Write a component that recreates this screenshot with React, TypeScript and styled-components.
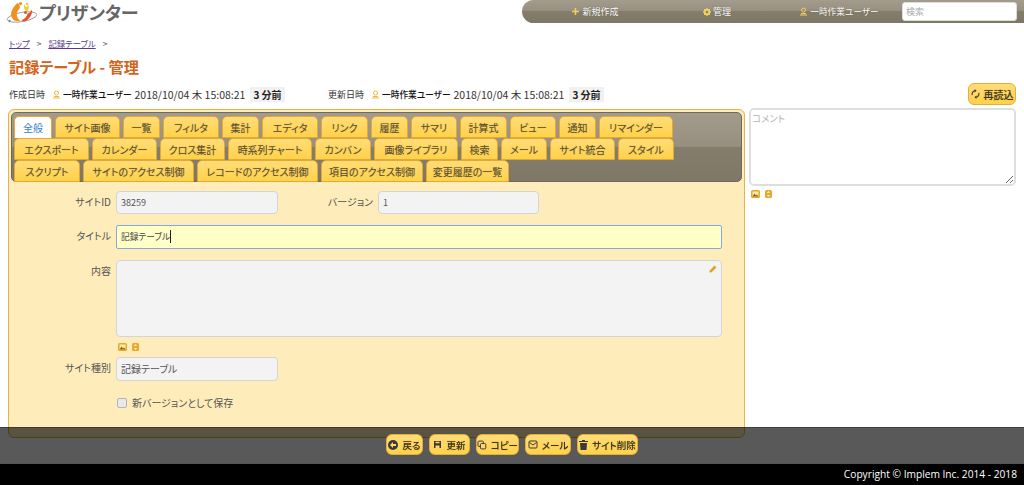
import React from 'react';
import styled, { createGlobalStyle } from 'styled-components';

const GlobalStyle = createGlobalStyle`
  html, body {
    margin: 0;
    padding: 0;
    height: 100%;
    overflow: hidden;
    background: #fff;
  }
  body {
    font-family: "Noto Sans CJK JP", "Noto Sans", sans-serif;
    font-size: 10px;
    font-feature-settings: "palt";
    color: #333;
  }
`;

const barGradient = 'linear-gradient(to bottom, #a39b8c 0%, #968e7e 50%, #857d6c 50%, #7e7767 100%)';
const buttonGradient = 'linear-gradient(to bottom, #ffdc78 0%, #ffd24a 100%)';

const Page = styled.div`
  width: 1024px;
  height: 485px;
  overflow: hidden;
`;

const Header = styled.header`
  display: flex;
  justify-content: space-between;
  height: 32px;
`;

const Logo = styled.div`
  display: flex;
  align-items: flex-start;
  padding-left: 5px;
`;

const LogoText = styled.span`
  font-size: 18px;
  font-weight: 700;
  line-height: 24px;
  color: #666;
  letter-spacing: -0.2px;
  white-space: nowrap;
`;

const Nav = styled.nav`
  width: 502px;
  height: 23px;
  box-sizing: border-box;
  padding-left: 12px;
  display: flex;
  align-items: center;
  background: ${barGradient};
  border-radius: 12px 0 0 12px;
`;

const NavItem = styled.a`
  width: 122px;
  display: flex;
  align-items: center;
  justify-content: center;
  gap: 2px;
  color: #fff;
  font-size: ${p => p.$fs ?? 9}px;
  white-space: nowrap;
  text-shadow: 0 0 1px #544d3e;
`;

const SearchBox = styled.input`
  width: 115px;
  height: 19px;
  margin-left: 2px;
  box-sizing: border-box;
  padding: 0 3px;
  border: 1px solid #ddd;
  border-radius: 3px;
  background: #fff;
  font: inherit;
  font-size: 9px;
  &::placeholder { color: #aaa; }
`;

const Breadcrumb = styled.div`
  display: flex;
  align-items: center;
  height: 22px;
  padding-left: 9px;
  font-size: 8.4px;
  a { color: #5a3c8c; text-decoration: underline; }
`;

const Sep = styled.span`
  margin: 0 7px;
  color: #555;
`;

const Title = styled.h1`
  margin: 0;
  height: 26px;
  padding-left: 9px;
  font-size: 15.2px;
  line-height: 24px;
  font-weight: 700;
  color: #d2651b;
`;

const InfoRow = styled.div`
  display: flex;
  align-items: center;
  height: 28px;
  padding: 0 8px 0 9px;
`;

const InfoGroup = styled.div`
  width: 319px;
  display: flex;
  align-items: center;
  font-size: 9px;
  white-space: nowrap;
`;

const InfoUser = styled.span`
  display: inline-flex;
  align-items: center;
  gap: 2px;
  margin: 0 3px 0 7px;
  font-size: 8.7px;
  font-weight: 500;
  color: #111;
`;

const Stamp = styled.span`
  font-size: 10.5px;
`;

const Ago = styled.span`
  margin-left: 5px;
  padding: 0 3px;
  background: #f1f1f1;
  font-size: 10px;
  font-weight: 700;
  color: #222;
`;

const Button = styled.button`
  display: inline-flex;
  align-items: center;
  justify-content: center;
  gap: 4px;
  box-sizing: border-box;
  width: ${p => p.$w}px;
  height: 21px;
  padding: 0;
  border: 1px solid #e6ae35;
  border-radius: 6px;
  background: ${buttonGradient};
  color: #3d3522;
  font: inherit;
  font-size: 9.5px;
  font-weight: 500;
  white-space: nowrap;
  text-shadow: 0 0 1px #b99638;
`;

const ReloadButton = styled(Button)`
  margin-left: auto;
  height: 22px;
  font-size: 10px;
`;

const Main = styled.main`
  display: flex;
  align-items: flex-start;
  padding-left: 8px;
`;

const Panel = styled.section`
  width: 737px;
  height: 329px;
  box-sizing: border-box;
  border: 1px solid #e5b24c;
  border-radius: 6px;
  padding: 2px;
  margin-top: 1px;
  background: #feedbb;
`;

const TabBar = styled.div`
  height: 70px;
  box-sizing: border-box;
  padding: 3px 0 0 2px;
  border: 1px solid #6f6a5c;
  border-radius: 5px;
  background: ${barGradient};
`;

const TabRow = styled.div`
  display: flex;
  gap: 3px;
  height: 22px;
`;

const Tab = styled.a`
  width: ${p => p.$w}px;
  height: 22px;
  box-sizing: border-box;
  display: flex;
  align-items: center;
  justify-content: center;
  border: 1px solid #e2a935;
  border-bottom-width: ${p => (p.$active ? 0 : 1)}px;
  border-radius: 5px 5px 0 0;
  background: ${p => (p.$active ? '#fff' : buttonGradient)};
  color: ${p => (p.$active ? '#2f7fd1' : '#5a4f33')};
  font-size: 10px;
  white-space: nowrap;
  text-shadow: ${p => (p.$active ? 'none' : '0 0 1px #c8a548')};
`;

const Form = styled.div`
  display: flex;
  flex-direction: column;
  padding-top: 9px;
`;

const FieldRow = styled.div`
  display: flex;
  align-items: flex-start;
  margin-bottom: ${p => p.$mb ?? 11}px;
`;

const Label = styled.label`
  width: ${p => p.$w ?? 105}px;
  padding-right: 5px;
  box-sizing: border-box;
  text-align: right;
  line-height: 21px;
  font-size: 10px;
  color: #555;
`;

const ReadOnly = styled.div`
  width: ${p => p.$w ?? 162}px;
  height: ${p => p.$h ?? 23}px;
  box-sizing: border-box;
  position: relative;
  padding: 0 4px;
  border: 1px solid #d4d4d4;
  border-radius: 4px;
  background: #f3f3f3;
  font-size: ${p => p.$fs ?? 9}px;
  line-height: 21px;
  color: #555;
`;

const TitleInput = styled.div`
  width: 606px;
  height: 24px;
  box-sizing: border-box;
  padding: 0 4px;
  border: 1px solid #82a9dc;
  border-radius: 2px;
  background: #ffffc8;
  font-size: 8.7px;
  line-height: 22px;
  color: #444;
`;

const Caret = styled.span`
  display: inline-block;
  width: 1px;
  height: 13px;
  background: #222;
  vertical-align: -3px;
`;

const EditPencil = styled.span`
  position: absolute;
  top: 4px;
  right: 4px;
  display: flex;
`;

const IconLine = styled.div`
  display: flex;
  gap: 5px;
  margin: ${p => p.$m};
  height: 8px;
`;

const CheckLine = styled.div`
  display: flex;
  align-items: center;
  gap: 5px;
  padding-left: 106px;
  margin-top: 1px;
  color: #555;
`;

const CheckMark = styled.span`
  width: 8px;
  height: 8px;
  border: 1px solid #b5b5b5;
  border-radius: 2px;
  background: #e9e9e9;
`;

const Side = styled.aside`
  width: 267px;
  margin-left: 4px;
`;

const CommentBox = styled.textarea`
  display: block;
  width: 267px;
  height: 78px;
  box-sizing: border-box;
  padding: 1px 1px;
  border: 2px solid #dedede;
  border-radius: 5px;
  background: #fff;
  font: inherit;
  font-size: 9.5px;
  &::placeholder { color: #b5b5b5; }
`;

const CommandBar = styled.div`
  position: fixed;
  left: 0;
  right: 0;
  bottom: 22px;
  height: 36px;
  box-sizing: border-box;
  border-top: 1px solid rgba(0, 0, 0, 0.3);
  padding-top: 6px;
  display: flex;
  justify-content: center;
  gap: 6px;
  background: rgba(0, 0, 0, 0.65);
`;

const Footer = styled.footer`
  position: fixed;
  left: 0;
  right: 0;
  bottom: 0;
  height: 22px;
  box-sizing: border-box;
  padding-right: 7px;
  border-top: 1px solid #555;
  background: #000;
  color: #fff;
  font-family: "Open Sans", sans-serif;
  font-size: 10.2px;
  line-height: 21px;
  text-align: right;
`;

const Person = ({ color = '#e9b93a' }: { color?: string }) => (
  <svg width="9" height="9" viewBox="0 0 9 9" fill="none">
    <circle cx="4.5" cy="3" r="2" stroke={color} />
    <path d="M1 8h7M2 6.5h5" stroke={color} />
  </svg>
);

const Plus = () => (
  <svg width="9" height="9" viewBox="0 0 9 9">
    <path d="M3.7 1h1.6v2.7H8v1.6H5.3V8H3.7V5.3H1V3.7h2.7z" fill="#f2cf5b" />
  </svg>
);

const Gear = () => (
  <svg width="8" height="8" viewBox="0 0 8 8">
    <path d="M1 1h6v6H1z" fill="#f2cf5b" />
    <path d="M3.3 0h1.4v8H3.3zM0 3.3h8v1.4H0z" fill="#f2cf5b" />
    <circle cx="4" cy="4" r="1.3" fill="#8a8271" />
  </svg>
);

const ImageChip = () => (
  <svg width="9" height="8" viewBox="0 0 9 8">
    <rect width="9" height="8" rx="1.5" fill="#e5a92f" />
    <path d="M1.5 1.5h6v5h-6z" fill="#fde9a9" />
    <path d="M1.5 6.5l2-3 1.5 2 1-1 1.5 2z" fill="#8a6416" />
  </svg>
);

const SizeChip = () => (
  <svg width="7" height="8" viewBox="0 0 7 8">
    <rect width="7" height="8" rx="1.5" fill="#e5a92f" />
    <path d="M3.5 1L5.3 3H1.7zM3.5 7L1.7 5h3.6z" fill="#fde9a9" />
  </svg>
);

const Pencil = () => (
  <svg width="8" height="8" viewBox="0 0 8 8">
    <path d="M5.6.6l1.8 1.8L2.6 7.2.4 7.6l.4-2.2z" fill="#e0a21f" />
  </svg>
);

const dark = '#3b3a3a';

const Reload = () => (
  <svg width="9" height="10" viewBox="0 0 9 10" fill="none" stroke={dark} strokeWidth="1.1">
    <path d="M1.2 6.2A3.4 3.4 0 0 1 4 1.8M7.8 3.8A3.4 3.4 0 0 1 5 8.2" />
    <path d="M3.6 0l2 1.8-2 1.8zM5.4 6.4l-2 1.8 2 1.8z" fill={dark} stroke="none" />
  </svg>
);

const Back = () => (
  <svg width="10" height="10" viewBox="0 0 10 10">
    <circle cx="5" cy="5" r="5" fill={dark} />
    <path d="M5 2L2 5l3 3V6h3V4H5z" fill="#ffd66a" />
  </svg>
);

const Save = () => (
  <svg width="9" height="9" viewBox="0 0 9 9">
    <path d="M1 1h7v7H1z" fill={dark} />
    <path d="M2.5 1.8h4v1.4h-4zM2.5 5.5h4V8h-4z" fill="#ffd66a" />
  </svg>
);

const Copy = () => (
  <svg width="10" height="10" viewBox="0 0 10 10" fill="#ffd66a" stroke={dark}>
    <rect x="1" y="1" width="5.5" height="5.5" rx="1" />
    <rect x="3.5" y="3.5" width="5.5" height="5.5" rx="1" />
  </svg>
);

const Mail = () => (
  <svg width="10" height="9" viewBox="0 0 10 9" fill="none" stroke={dark}>
    <rect x="1" y="1" width="8" height="7" rx="1" />
    <path d="M1.5 2.5L5 5l3.5-2.5" />
  </svg>
);

const Trash = () => (
  <svg width="9" height="10" viewBox="0 0 9 10">
    <path d="M3 0h3v1h3v1H0V1h3zM1 3h7l-.5 7h-6z" fill={dark} />
  </svg>
);

const LogoMark = () => (
  <svg width="34" height="25" viewBox="0 0 34 25" fill="none">
    <ellipse cx="17" cy="17" rx="15" ry="4.6" stroke="#9a9a9a" strokeWidth="0.9" transform="rotate(-10 17 17)" />
    <path d="M12.5 3C8 7 5 12 6.5 17c1.3 3.4 5 5 9 4-3.8-2-5.5-8-1-12.5 1-1.5 0-4.5-2-5.5z" fill="#f08f22" />
    <circle cx="15.5" cy="3.6" r="1.6" fill="#f08f22" />
    <path d="M19 3.5c-.8 3 .2 6 2.5 8.5 2-1.5 3-5 2-7.5-.8 1.8-1.8 2.6-2.6 2.6-.9-.8-1.5-2-1.9-3.6z" fill="#e9cf3a" />
    <circle cx="22" cy="4" r="1.3" fill="#e9cf3a" />
    <path d="M27 9.5c.8 4-2 9.5-7.5 12-1.5-.2-2.5-.8-3-1.6 3.5-.6 5.5-3.5 6-6.4 1.5 0 3-1.6 4.5-4z" fill="#e8502a" />
    <circle cx="20.5" cy="12.5" r="1.5" fill="#e8502a" />
    <circle cx="4.5" cy="21" r="1.2" fill="#8d8d8d" />
  </svg>
);

const tabRows: { label: string; w: number; active?: boolean }[][] = [
  [
    { label: '全般', w: 38, active: true },
    { label: 'サイト画像', w: 65 },
    { label: '一覧', w: 37 },
    { label: 'フィルタ', w: 56 },
    { label: '集計', w: 37 },
    { label: 'エディタ', w: 56 },
    { label: 'リンク', w: 47 },
    { label: '履歴', w: 37 },
    { label: 'サマリ', w: 46 },
    { label: '計算式', w: 47 },
    { label: 'ビュー', w: 46 },
    { label: '通知', w: 37 },
    { label: 'リマインダー', w: 74 },
  ],
  [
    { label: 'エクスポート', w: 75 },
    { label: 'カレンダー', w: 65 },
    { label: 'クロス集計', w: 65 },
    { label: '時系列チャート', w: 84 },
    { label: 'カンバン', w: 56 },
    { label: '画像ライブラリ', w: 84 },
    { label: '検索', w: 37 },
    { label: 'メール', w: 46 },
    { label: 'サイト統合', w: 65 },
    { label: 'スタイル', w: 56 },
  ],
  [
    { label: 'スクリプト', w: 66 },
    { label: 'サイトのアクセス制御', w: 111 },
    { label: 'レコードのアクセス制御', w: 121 },
    { label: '項目のアクセス制御', w: 102 },
    { label: '変更履歴の一覧', w: 83 },
  ],
];

const commands = [
  { label: '戻る', w: 37, icon: <Back /> },
  { label: '更新', w: 41, icon: <Save /> },
  { label: 'コピー', w: 43, icon: <Copy /> },
  { label: 'メール', w: 46, icon: <Mail /> },
  { label: 'サイト削除', w: 61, icon: <Trash /> },
];

const Info = ({ label }: { label: string }) => (
  <InfoGroup>
    {label}
    <InfoUser>
      <Person />
      一時作業ユーザー
    </InfoUser>
    <Stamp>2018/10/04 木 15:08:21</Stamp>
    <Ago>3 分前</Ago>
  </InfoGroup>
);

export default function App() {
  return (
    <Page>
      <GlobalStyle />
      <Header>
        <Logo>
          <LogoMark />
          <LogoText>プリザンター</LogoText>
        </Logo>
        <Nav>
          <NavItem><Plus />新規作成</NavItem>
          <NavItem><Gear />管理</NavItem>
          <NavItem $fs={8.7}><Person color="#f2cf5b" />一時作業ユーザー</NavItem>
          <SearchBox placeholder="検索" />
        </Nav>
      </Header>
      <Breadcrumb>
        <a>トップ</a>
        <Sep>&gt;</Sep>
        <a>記録テーブル</a>
        <Sep>&gt;</Sep>
      </Breadcrumb>
      <Title>記録テーブル - 管理</Title>
      <InfoRow>
        <Info label="作成日時" />
        <Info label="更新日時" />
        <ReloadButton $w={48}><Reload />再読込</ReloadButton>
      </InfoRow>
      <Main>
        <Panel>
          <TabBar>
            {tabRows.map((row, i) => (
              <TabRow key={i}>
                {row.map(t => (
                  <Tab key={t.label} $w={t.w} $active={t.active}>{t.label}</Tab>
                ))}
              </TabRow>
            ))}
          </TabBar>
          <Form>
            <FieldRow>
              <Label>サイトID</Label>
              <ReadOnly>38259</ReadOnly>
              <Label $w={100}>バージョン</Label>
              <ReadOnly $w={161}>1</ReadOnly>
            </FieldRow>
            <FieldRow>
              <Label>タイトル</Label>
              <TitleInput>記録テーブル<Caret /></TitleInput>
            </FieldRow>
            <FieldRow $mb={0}>
              <Label>内容</Label>
              <ReadOnly $w={606} $h={77}>
                <EditPencil><Pencil /></EditPencil>
              </ReadOnly>
            </FieldRow>
            <IconLine $m="6px 0 6px 107px">
              <ImageChip />
              <SizeChip />
            </IconLine>
            <FieldRow $mb={13}>
              <Label>サイト種別</Label>
              <ReadOnly $h={24} $fs={10}>記録テーブル</ReadOnly>
            </FieldRow>
            <CheckLine>
              <CheckMark />
              新バージョンとして保存
            </CheckLine>
          </Form>
        </Panel>
        <Side>
          <CommentBox placeholder="コメント" />
          <IconLine $m="4px 0 0 2px">
            <ImageChip />
            <SizeChip />
          </IconLine>
        </Side>
      </Main>
      <CommandBar>
        {commands.map(c => (
          <Button key={c.label} $w={c.w}>{c.icon}{c.label}</Button>
        ))}
      </CommandBar>
      <Footer>Copyright © Implem Inc. 2014 - 2018</Footer>
    </Page>
  );
}
